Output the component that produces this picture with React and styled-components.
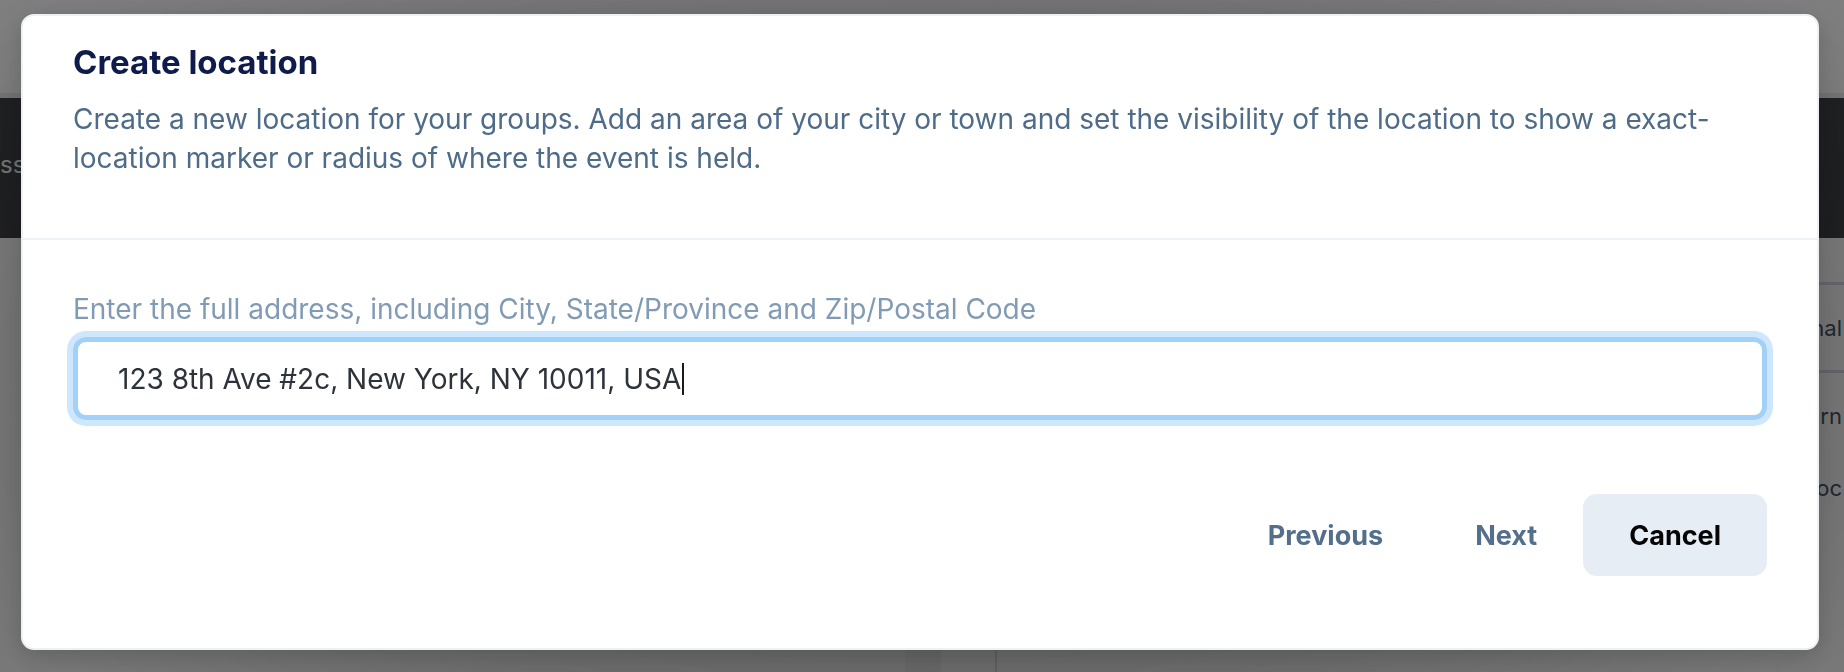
import React from "react";
import styled, { createGlobalStyle } from "styled-components";

const GlobalStyle = createGlobalStyle`
  * {
    box-sizing: border-box;
  }
  html,
  body {
    margin: 0;
    padding: 0;
    height: 100%;
    overflow: hidden;
    font-family: Inter, "Noto Sans", "Liberation Sans", sans-serif;
  }
`;

// page behind the dialog
const Page = styled.div`
  width: 100vw;
  height: 100vh;
  background: #ffffff;
  display: flex;
  flex-direction: column;
  overflow: hidden;
`;

const TopBar = styled.div`
  height: 98px;
  flex-shrink: 0;
  background: #ffffff;
  border-bottom: 5px solid #ececec;
`;

const Band = styled.div`
  height: 140px;
  flex-shrink: 0;
  background: #404247;
  display: flex;
  align-items: center;
  padding-bottom: 8px;
`;

const BandLink = styled.span`
  font-size: 24px;
  color: #f2f2f2;
`;

const Body = styled.div`
  flex: 1;
  display: grid;
  grid-template-columns: 905px 36px 56px 1fr 220px;
`;

const MainColumn = styled.div``;

const Scroller = styled.div`
  background: #f4f4f4;
`;

const Gutter = styled.div`
  border-right: 2px solid #e2e2e2;
`;

const SidePanel = styled.div`
  padding-top: 44px;
  display: flex;
  flex-direction: column;
`;

const SideRow = styled.div`
  height: ${(p) => p.h}px;
  display: flex;
  align-items: center;
  justify-content: flex-end;
  padding-right: 2px;
  white-space: nowrap;
  font-size: 22px;
  color: #43566b;
  border-top: ${(p) => (p.lined ? "3px solid #d3dbe4" : "none")};
  border-bottom: ${(p) => (p.lined ? "3px solid #d3dbe4" : "none")};
`;

// dialog
const Backdrop = styled.div`
  position: fixed;
  inset: 0;
  background: radial-gradient(
    ellipse at 50% 60%,
    rgba(0, 0, 0, 0.64) 0%,
    rgba(0, 0, 0, 0.58) 55%,
    rgba(0, 0, 0, 0.5) 100%
  );
`;

const Dialog = styled.div`
  position: fixed;
  top: 14px;
  left: 21px;
  width: 1798px;
  background: #ffffff;
  border: 2px solid #edf1f6;
  border-radius: 13px;
  box-shadow: 0 6px 24px rgba(0, 0, 0, 0.18);
  display: flex;
  flex-direction: column;
`;

const Header = styled.div`
  padding: 26px 50px 60px;
  border-bottom: 2px solid #eef2f7;
`;

const Title = styled.h2`
  margin: 0;
  font-size: 33px;
  line-height: 40px;
  font-weight: 700;
  color: #0e1b4b;
`;

const Description = styled.p`
  margin: 18px 0 0;
  font-size: 28px;
  line-height: 39px;
  color: #4e6b88;
`;

const Content = styled.div`
  padding: 50px 50px 72px;
  display: flex;
  flex-direction: column;
`;

const Label = styled.label`
  font-size: 28px;
  line-height: 39px;
  color: #819bb5;
`;

const AddressField = styled.div`
  margin-top: 8px;
  height: 83px;
  padding: 0 40px;
  display: flex;
  align-items: center;
  border: 5px solid #a1d0f8;
  border-radius: 13px;
  box-shadow: 0 0 0 6px #cfe7fc;
  font-size: 28px;
  color: #2d333a;
`;

const Caret = styled.span`
  display: inline-block;
  width: 2px;
  height: 32px;
  margin-left: 1px;
  background: #1a1a1a;
`;

const Footer = styled.div`
  margin-top: 74px;
  display: flex;
  justify-content: flex-end;
`;

const Button = styled.button`
  height: 82px;
  padding: 0 46px;
  border: none;
  border-radius: 14px;
  font-family: inherit;
  font-size: 27px;
  font-weight: 700;
  cursor: pointer;
  background: ${(p) => (p.filled ? "#e6edf4" : "transparent")};
  color: ${(p) => (p.filled ? "#050505" : "#536f8b")};
`;

const App = () => {
  return (
    <>
      <GlobalStyle />
      <Page>
        <TopBar />
        <Band>
          <BandLink>ss</BandLink>
        </Band>
        <Body>
          <MainColumn />
          <Scroller />
          <Gutter />
          <MainColumn />
          <SidePanel>
            <SideRow h={91} lined>
              Personal
            </SideRow>
            <SideRow h={86}>Learn</SideRow>
            <SideRow h={58}>Soc</SideRow>
          </SidePanel>
        </Body>
      </Page>
      <Backdrop />
      <Dialog role="dialog">
        <Header>
          <Title>Create location</Title>
          <Description>
            Create a new location for your groups. Add an area of your city or
            town and set the visibility of the location to show a
            exact-location marker or radius of where the event is held.
          </Description>
        </Header>
        <Content>
          <Label>
            Enter the full address, including City, State/Province and
            Zip/Postal Code
          </Label>
          <AddressField role="textbox">
            123 8th Ave #2c, New York, NY 10011, USA
            <Caret />
          </AddressField>
          <Footer>
            <Button>Previous</Button>
            <Button>Next</Button>
            <Button filled>Cancel</Button>
          </Footer>
        </Content>
      </Dialog>
    </>
  );
};

export default App;
